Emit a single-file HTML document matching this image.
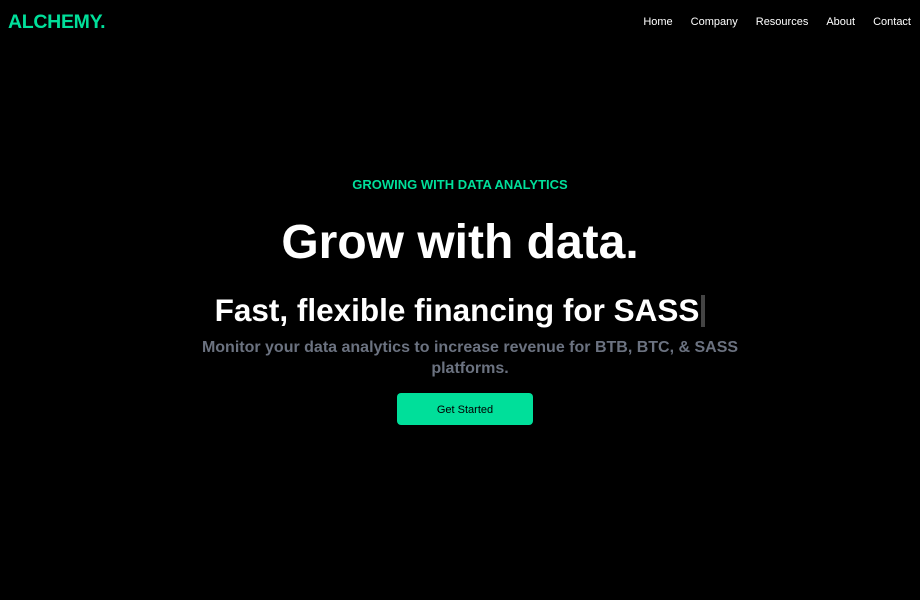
<!DOCTYPE html>
<html><head><style>
body{margin:0;background:#000;width:920px;height:600px;overflow:hidden;font-family:"Liberation Sans",sans-serif;color:#fff}
.logo{position:absolute;left:8px;top:11px;font-size:19.5px;font-weight:bold;color:#00df9a;letter-spacing:-0.3px}
nav{position:absolute;right:9px;top:16px;font-size:11px}
nav span{margin-left:18px}
.c{position:absolute;left:0;width:920px;text-align:center;font-weight:bold}
.t1{top:177px;font-size:13px;color:#00df9a}
.t2{top:215px;font-size:48px}
.t3{top:292px;font-size:31.5px}
.cur{display:inline-block;width:4px;height:32px;background:#444;vertical-align:-6px;margin-left:2px}
.t4{top:337px;font-size:16px;color:#6b7280;line-height:21px;left:190px;width:560px}
.btn{position:absolute;left:397px;top:393px;width:136px;height:32px;background:#00df9a;border-radius:4px;color:#000;font-size:11px;text-align:center;line-height:34px}
</style></head><body>
<div class="logo">ALCHEMY.</div>
<nav><span>Home</span><span>Company</span><span>Resources</span><span>About</span><span>Contact</span></nav>
<div class="c t1">GROWING WITH DATA ANALYTICS</div>
<div class="c t2">Grow with data.</div>
<div class="c t3">Fast, flexible financing for SASS<span class="cur"></span></div>
<div class="c t4">Monitor your data analytics to increase revenue for BTB, BTC, &amp; SASS platforms.</div>
<div class="btn">Get Started</div>
</body></html>
